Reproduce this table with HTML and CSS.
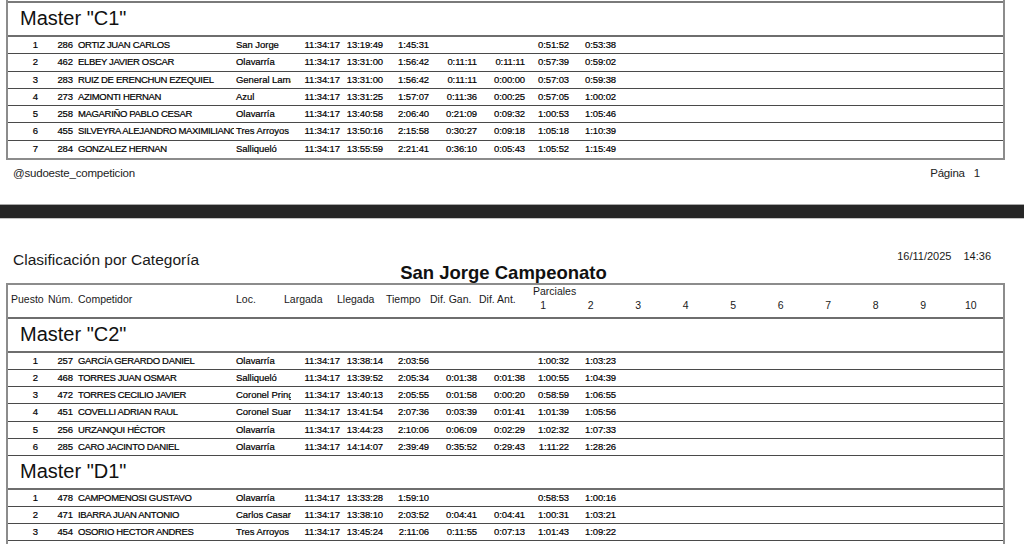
FILE: index.html
```html
<!DOCTYPE html>
<html lang="es">
<head>
<meta charset="utf-8">
<title>Clasificación por Categoría</title>
<link rel="stylesheet" href="styles.css">
</head>
<body>
<div class="viewer">
  <div class="page page-1">
    <div class="frame">
      <section class="cat">
        <div class="cat-title">Master "C1"</div>
        <div class="row"><span class="c-pos">1</span><span class="c-num">286</span><span class="c-name">ORTIZ JUAN CARLOS</span><span class="c-loc">San Jorge</span><span class="c-t">11:34:17</span><span class="c-t">13:19:49</span><span class="c-t">1:45:31</span><span class="c-t"></span><span class="c-t"></span><span class="c-t">0:51:52</span><span class="c-t">0:53:38</span><span></span></div>
        <div class="row"><span class="c-pos">2</span><span class="c-num">462</span><span class="c-name">ELBEY JAVIER OSCAR</span><span class="c-loc">Olavarría</span><span class="c-t">11:34:17</span><span class="c-t">13:31:00</span><span class="c-t">1:56:42</span><span class="c-t">0:11:11</span><span class="c-t">0:11:11</span><span class="c-t">0:57:39</span><span class="c-t">0:59:02</span><span></span></div>
        <div class="row"><span class="c-pos">3</span><span class="c-num">283</span><span class="c-name">RUIZ DE ERENCHUN EZEQUIEL</span><span class="c-loc">General Lamadrid</span><span class="c-t">11:34:17</span><span class="c-t">13:31:00</span><span class="c-t">1:56:42</span><span class="c-t">0:11:11</span><span class="c-t">0:00:00</span><span class="c-t">0:57:03</span><span class="c-t">0:59:38</span><span></span></div>
        <div class="row"><span class="c-pos">4</span><span class="c-num">273</span><span class="c-name">AZIMONTI HERNAN</span><span class="c-loc">Azul</span><span class="c-t">11:34:17</span><span class="c-t">13:31:25</span><span class="c-t">1:57:07</span><span class="c-t">0:11:36</span><span class="c-t">0:00:25</span><span class="c-t">0:57:05</span><span class="c-t">1:00:02</span><span></span></div>
        <div class="row"><span class="c-pos">5</span><span class="c-num">258</span><span class="c-name">MAGARIÑO PABLO CESAR</span><span class="c-loc">Olavarría</span><span class="c-t">11:34:17</span><span class="c-t">13:40:58</span><span class="c-t">2:06:40</span><span class="c-t">0:21:09</span><span class="c-t">0:09:32</span><span class="c-t">1:00:53</span><span class="c-t">1:05:46</span><span></span></div>
        <div class="row"><span class="c-pos">6</span><span class="c-num">455</span><span class="c-name">SILVEYRA ALEJANDRO MAXIMILIANO</span><span class="c-loc">Tres Arroyos</span><span class="c-t">11:34:17</span><span class="c-t">13:50:16</span><span class="c-t">2:15:58</span><span class="c-t">0:30:27</span><span class="c-t">0:09:18</span><span class="c-t">1:05:18</span><span class="c-t">1:10:39</span><span></span></div>
        <div class="row last"><span class="c-pos">7</span><span class="c-num">284</span><span class="c-name">GONZALEZ HERNAN</span><span class="c-loc">Salliqueló</span><span class="c-t">11:34:17</span><span class="c-t">13:55:59</span><span class="c-t">2:21:41</span><span class="c-t">0:36:10</span><span class="c-t">0:05:43</span><span class="c-t">1:05:52</span><span class="c-t">1:15:49</span><span></span></div>
      </section>
    </div>
    <footer class="page-foot">
      <span>@sudoeste_competicion</span>
      <span class="page-no">Página<span class="page-n">1</span></span>
    </footer>
  </div>

  <div class="page-gap"></div>

  <div class="page page-2">
    <header class="report-head">
      <div class="report-title">Clasificación por Categoría</div>
      <div class="report-date"><span>16/11/2025</span><span>14:36</span></div>
    </header>
    <div class="event">San Jorge Campeonato</div>
    <div class="frame frame-open">
      <div class="thead">
        <span class="h-pos">Puesto</span>
        <span>Núm.</span>
        <span>Competidor</span>
        <span>Loc.</span>
        <span>Largada</span>
        <span>Llegada</span>
        <span>Tiempo</span>
        <span>Dif. Gan.</span>
        <span>Dif. Ant.</span>
        <div class="parc">
          <div class="parc-label">Parciales</div>
          <div class="parc-nums"><span>1</span><span>2</span><span>3</span><span>4</span><span>5</span><span>6</span><span>7</span><span>8</span><span>9</span><span>10</span></div>
        </div>
      </div>
      <section class="cat">
        <div class="cat-title">Master "C2"</div>
        <div class="row"><span class="c-pos">1</span><span class="c-num">257</span><span class="c-name">GARCÍA GERARDO DANIEL</span><span class="c-loc">Olavarría</span><span class="c-t">11:34:17</span><span class="c-t">13:38:14</span><span class="c-t">2:03:56</span><span class="c-t"></span><span class="c-t"></span><span class="c-t">1:00:32</span><span class="c-t">1:03:23</span><span></span></div>
        <div class="row"><span class="c-pos">2</span><span class="c-num">468</span><span class="c-name">TORRES JUAN OSMAR</span><span class="c-loc">Salliqueló</span><span class="c-t">11:34:17</span><span class="c-t">13:39:52</span><span class="c-t">2:05:34</span><span class="c-t">0:01:38</span><span class="c-t">0:01:38</span><span class="c-t">1:00:55</span><span class="c-t">1:04:39</span><span></span></div>
        <div class="row"><span class="c-pos">3</span><span class="c-num">472</span><span class="c-name">TORRES CECILIO JAVIER</span><span class="c-loc">Coronel Pringles</span><span class="c-t">11:34:17</span><span class="c-t">13:40:13</span><span class="c-t">2:05:55</span><span class="c-t">0:01:58</span><span class="c-t">0:00:20</span><span class="c-t">0:58:59</span><span class="c-t">1:06:55</span><span></span></div>
        <div class="row"><span class="c-pos">4</span><span class="c-num">451</span><span class="c-name">COVELLI ADRIAN RAUL</span><span class="c-loc">Coronel Suarez</span><span class="c-t">11:34:17</span><span class="c-t">13:41:54</span><span class="c-t">2:07:36</span><span class="c-t">0:03:39</span><span class="c-t">0:01:41</span><span class="c-t">1:01:39</span><span class="c-t">1:05:56</span><span></span></div>
        <div class="row"><span class="c-pos">5</span><span class="c-num">256</span><span class="c-name">URZANQUI HÉCTOR</span><span class="c-loc">Olavarría</span><span class="c-t">11:34:17</span><span class="c-t">13:44:23</span><span class="c-t">2:10:06</span><span class="c-t">0:06:09</span><span class="c-t">0:02:29</span><span class="c-t">1:02:32</span><span class="c-t">1:07:33</span><span></span></div>
        <div class="row"><span class="c-pos">6</span><span class="c-num">285</span><span class="c-name">CARO JACINTO DANIEL</span><span class="c-loc">Olavarría</span><span class="c-t">11:34:17</span><span class="c-t">14:14:07</span><span class="c-t">2:39:49</span><span class="c-t">0:35:52</span><span class="c-t">0:29:43</span><span class="c-t">1:11:22</span><span class="c-t">1:28:26</span><span></span></div>
      </section>
      <section class="cat">
        <div class="cat-title">Master "D1"</div>
        <div class="row"><span class="c-pos">1</span><span class="c-num">478</span><span class="c-name">CAMPOMENOSI GUSTAVO</span><span class="c-loc">Olavarría</span><span class="c-t">11:34:17</span><span class="c-t">13:33:28</span><span class="c-t">1:59:10</span><span class="c-t"></span><span class="c-t"></span><span class="c-t">0:58:53</span><span class="c-t">1:00:16</span><span></span></div>
        <div class="row"><span class="c-pos">2</span><span class="c-num">471</span><span class="c-name">IBARRA JUAN ANTONIO</span><span class="c-loc">Carlos Casares</span><span class="c-t">11:34:17</span><span class="c-t">13:38:10</span><span class="c-t">2:03:52</span><span class="c-t">0:04:41</span><span class="c-t">0:04:41</span><span class="c-t">1:00:31</span><span class="c-t">1:03:21</span><span></span></div>
        <div class="row"><span class="c-pos">3</span><span class="c-num">454</span><span class="c-name">OSORIO HECTOR ANDRES</span><span class="c-loc">Tres Arroyos</span><span class="c-t">11:34:17</span><span class="c-t">13:45:24</span><span class="c-t">2:11:06</span><span class="c-t">0:11:55</span><span class="c-t">0:07:13</span><span class="c-t">1:01:43</span><span class="c-t">1:09:22</span><span></span></div>
      </section>
    </div>
  </div>
</div>
</body>
</html>
```

FILE: styles.css
```css
html, body {
  margin: 0;
  padding: 0;
  overflow: hidden;
  background: #ffffff;
}

body {
  font-family: "Liberation Sans", Arial, sans-serif;
  color: #111111;
}

.viewer {
  width: 1024px;
  height: 544px;
  overflow: hidden;
}

.page {
  background: #ffffff;
}

.page-1 {
  height: 204px;
}

.frame {
  margin-left: 6px;
  width: 999px;
  box-sizing: border-box;
  border-left: 2px solid #8c8c8c;
  border-right: 2px solid #8c8c8c;
}

.page-1 .frame {
  padding-top: 1px;
  border-bottom: 2px solid #8c8c8c;
}

.page-1 .cat-title {
  height: 36px;
  border-top: 2px solid #7a7a7a;
}

.page-1 .row {
  height: 17.25px;
}

.cat-title {
  height: 34px;
  box-sizing: border-box;
  border-bottom: 2px solid #6e6e6e;
  display: flex;
  align-items: center;
  padding-left: 12px;
  padding-bottom: 1px;
  font-size: 20px;
  color: #111111;
}

.row {
  display: grid;
  grid-template-columns: 32px 34px 160px 57px 51px 43px 46px 48px 48px 44px 47px 1fr;
  height: 17.15px;
  box-sizing: border-box;
  border-bottom: 1px solid #4a4a4a;
  align-items: center;
  font-size: 9.5px;
  line-height: 16px;
  letter-spacing: -0.1px;
  white-space: nowrap;
  color: #000000;
  -webkit-text-stroke: 0.2px #000000;
}

.row.last {
  border-bottom: none;
}

.row > span {
  overflow: hidden;
}

.c-pos {
  text-align: right;
  padding-right: 2px;
}

.c-num {
  text-align: right;
  padding-right: 1px;
}

.c-name {
  padding-left: 4px;
  letter-spacing: -0.34px;
}

.c-loc {
  padding-left: 2px;
  letter-spacing: -0.05px;
}

.c-t {
  text-align: right;
  padding-right: 2px;
}

.page-foot {
  display: flex;
  justify-content: space-between;
  padding: 6px 44px 0 13px;
  font-size: 11.5px;
  line-height: 14px;
  letter-spacing: -0.2px;
  color: #222222;
}

.page-no {
  display: flex;
  gap: 9px;
}

.page-gap {
  height: 13px;
  background: #262626;
  border-top: 1px solid #a8a8a8;
  border-bottom: 1px solid #c4c4c4;
}

.page-2 {
  padding-top: 30px;
  height: 400px;
}

.report-head {
  display: flex;
  justify-content: space-between;
  align-items: flex-start;
  height: 20px;
  padding: 0 33px 0 13px;
}

.report-title {
  margin-top: 2px;
  font-size: 15.5px;
  line-height: 18px;
  color: #1a1a1a;
}

.report-date {
  display: flex;
  gap: 12px;
  font-size: 11px;
  line-height: 14px;
  color: #1a1a1a;
}

.event {
  margin-top: -6px;
  margin-left: 6px;
  width: 995px;
  text-align: center;
  font-weight: bold;
  font-size: 18.5px;
  line-height: 20px;
  color: #111111;
}

.frame-open {
  margin-top: 0;
  border-top: 2px solid #8c8c8c;
  height: 300px;
}

.thead {
  display: grid;
  grid-template-columns: 40px 30px 158px 48px 53px 49px 44px 49px 40.5px 1fr;
  height: 34px;
  box-sizing: border-box;
  border-bottom: 2px solid #6e6e6e;
  align-items: center;
  padding-bottom: 5px;
  font-size: 10.5px;
  white-space: nowrap;
  color: #1a1a1a;
}

.h-pos {
  padding-left: 3px;
}

.parc {
  align-self: start;
  display: flex;
  flex-direction: column;
}

.parc-label {
  padding-left: 13.5px;
  line-height: 13px;
}

.parc-nums {
  display: flex;
  margin-top: 1px;
  line-height: 13px;
}

.parc-nums span {
  width: 47.5px;
  text-align: center;
  flex: none;
}
```
